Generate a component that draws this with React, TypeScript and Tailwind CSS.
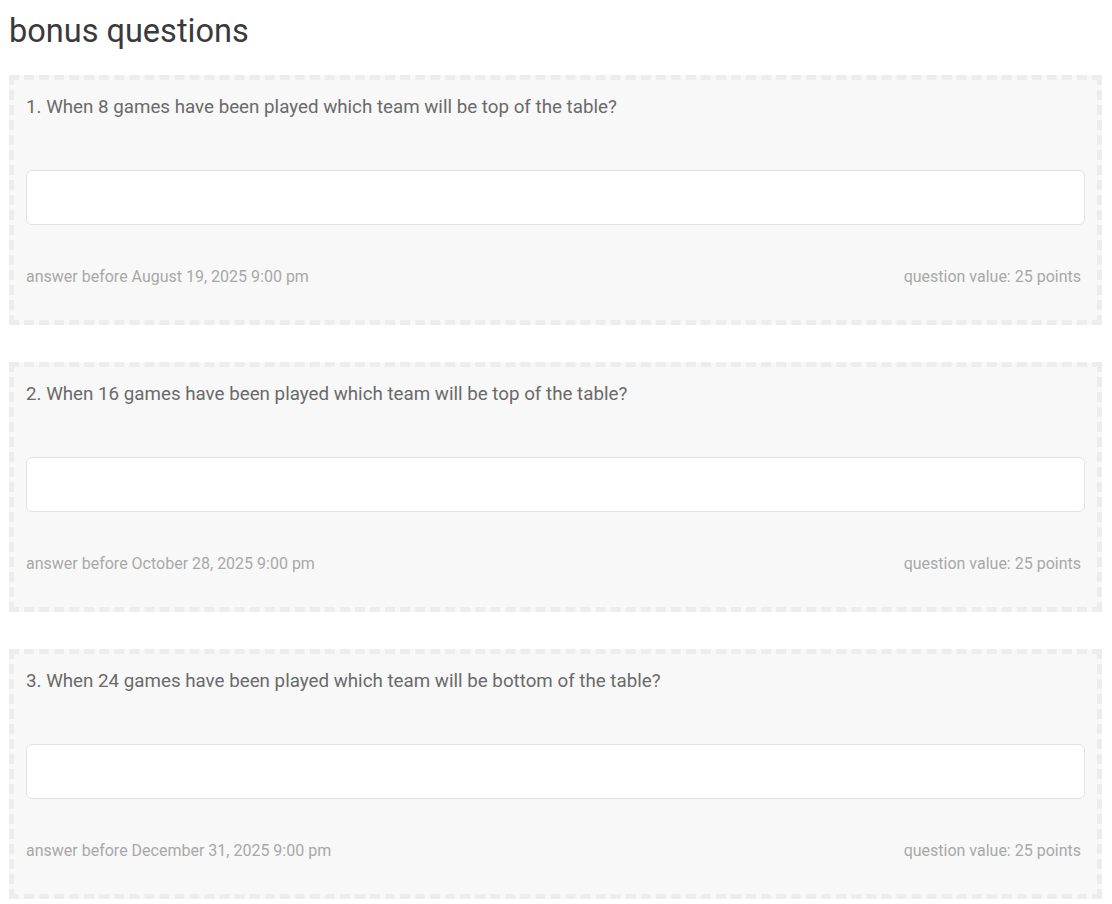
const questions = [
  { n: 1, text: "When 8 games have been played which team will be top of the table?", due: "August 19, 2025 9:00 pm" },
  { n: 2, text: "When 16 games have been played which team will be top of the table?", due: "October 28, 2025 9:00 pm" },
  { n: 3, text: "When 24 games have been played which team will be bottom of the table?", due: "December 31, 2025 9:00 pm" },
];

function QuestionCard({ n, text, due }: { n: number; text: string; due: string }) {
  return (
    <div className="border-[5px] border-dashed border-[#ededed] bg-[#f8f8f8] px-3 pt-[16px] pb-[33px]">
      <p className="text-[18.75px] leading-[23px] text-[#6a6a6a]">
        {n}. {text}
      </p>
      <input
        type="text"
        className="mt-[51px] block h-[55px] w-full rounded-md border border-[#e2e2e2] bg-white px-3 outline-none"
      />
      <div className="mt-[42px] flex items-center justify-between pr-1 text-[16px] leading-[20px] text-[#a8a8a8]">
        <span>answer before {due}</span>
        <span>question value: 25 points</span>
      </div>
    </div>
  );
}

export default function App() {
  return (
    <div className="min-h-[904px] bg-white pr-[10px] pl-[9px] pt-[10px] font-['Roboto',sans-serif]">
      <h1 className="text-[32.5px] leading-[42px] text-[#3a3a3a]">bonus questions</h1>
      <div className="mt-[23px] flex flex-col gap-[37px]">
        {questions.map((q) => (
          <QuestionCard key={q.n} {...q} />
        ))}
      </div>
    </div>
  );
}
